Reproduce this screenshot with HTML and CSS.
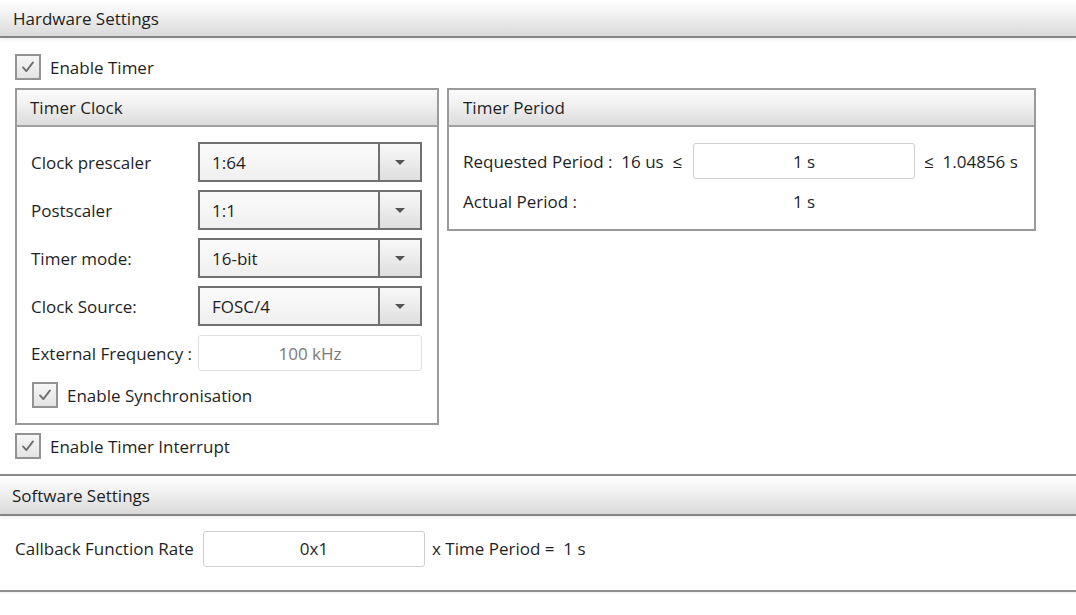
FILE: index.html
```html
<!DOCTYPE html>
<html>
<head>
<meta charset="utf-8">
<link rel="stylesheet" href="styles.css">
</head>
<body>
<div class="section-header first">Hardware Settings</div>
<div class="hw-body">
  <label class="check top-check"><span class="box"><svg viewBox="0 0 24 24"><path d="M6 12.5 L10 17 L18 6.5" /></svg></span><span>Enable Timer</span></label>
  <div class="groups">
    <div class="group clock">
      <div class="group-header">Timer Clock</div>
      <div class="group-body">
        <div class="row"><span class="lbl">Clock prescaler</span><div class="combo"><span class="val">1:64</span><span class="btn"><i class="tri"></i></span></div></div>
        <div class="row"><span class="lbl">Postscaler</span><div class="combo"><span class="val">1:1</span><span class="btn"><i class="tri"></i></span></div></div>
        <div class="row"><span class="lbl">Timer mode:</span><div class="combo"><span class="val">16-bit</span><span class="btn"><i class="tri"></i></span></div></div>
        <div class="row"><span class="lbl">Clock Source:</span><div class="combo"><span class="val">FOSC/4</span><span class="btn"><i class="tri"></i></span></div></div>
        <div class="row ext"><span class="lbl">External Frequency :</span><div class="text disabled">100 kHz</div></div>
        <label class="check sync"><span class="box"><svg viewBox="0 0 24 24"><path d="M6 12.5 L10 17 L18 6.5" /></svg></span><span>Enable Synchronisation</span></label>
      </div>
    </div>
    <div class="group period">
      <div class="group-header">Timer Period</div>
      <div class="group-body period-body">
        <div class="prow"><span class="plbl">Requested Period :&nbsp; 16 us&nbsp; ≤</span><div class="text ptext">1 s</div><span class="pmax">≤&nbsp; 1.04856 s</span></div>
        <div class="prow actual"><span class="plbl">Actual Period :</span><span class="pval">1 s</span></div>
      </div>
    </div>
  </div>
  <label class="check int-check"><span class="box"><svg viewBox="0 0 24 24"><path d="M6 12.5 L10 17 L18 6.5" /></svg></span><span>Enable Timer Interrupt</span></label>
</div>
<div class="section-header second">Software Settings</div>
<div class="sw-body">
  <span class="sw-lbl">Callback Function Rate</span>
  <div class="text swtext">0x1</div>
  <span class="sw-tail">x Time Period =&nbsp; 1 s</span>
</div>
<div class="bottom-line"></div>
</body>
</html>
```

FILE: styles.css
```css
html, body {
  margin: 0;
  padding: 0;
  background: #ffffff;
}
body {
  font-family: "Open Sans", "Noto Sans", sans-serif;
  font-size: 17px;
  color: #1f1f1f;
  width: 1076px;
  height: 615px;
  overflow: hidden;
}
.section-header {
  height: 36px;
  box-sizing: border-box;
  padding-left: 13px;
  display: flex;
  align-items: center;
  background: linear-gradient(to bottom, #ffffff 0%, #f3f3f3 35%, #dadada 100%);
  border-bottom: 2px solid #858585;
  box-shadow: 0 2px 3px rgba(0,0,0,0.06);
}
.section-header.first {
  height: 38px;
}
.section-header.second {
  border-top: 2px solid #8a8a8a;
  height: 42px;
  padding-left: 12px;
}
.hw-body {
  padding: 16px 15px 15px 15px;
}
.check {
  display: flex;
  align-items: center;
  gap: 9px;
}
.box {
  width: 22px;
  height: 22px;
  border: 2px solid #939393;
  background: linear-gradient(to bottom, #f6f6f6, #e4e4e4);
  display: flex;
  align-items: center;
  justify-content: center;
}
.box svg {
  width: 20px;
  height: 20px;
}
.box path {
  fill: none;
  stroke: #6e6e6e;
  stroke-width: 2.2;
  stroke-linecap: round;
  stroke-linejoin: round;
}
.top-check {
  height: 26px;
}
.groups {
  display: flex;
  align-items: flex-start;
  gap: 8px;
  margin-top: 8px;
}
.group {
  border: 2px solid #9a9a9a;
  background: #fff;
}
.group.clock {
  width: 420px;
}
.group.period {
  width: 585px;
}
.group-header {
  height: 37px;
  box-sizing: border-box;
  padding-left: 13px;
  display: flex;
  align-items: center;
  background: linear-gradient(to bottom, #fbfbfb 0%, #f1f1f1 40%, #dcdcdc 100%);
  border-bottom: 2px solid #a0a0a0;
}
.period .group-header {
  padding-left: 14px;
}
.group-body {
  padding: 15px 14px 15px 14px;
  display: flex;
  flex-direction: column;
  gap: 8px;
}
.row {
  display: flex;
  align-items: center;
}
.lbl {
  width: 167px;
  flex: none;
}
.combo {
  width: 224px;
  height: 40px;
  box-sizing: border-box;
  border: 2px solid #707070;
  display: flex;
  background: linear-gradient(to bottom, #fcfcfc, #efefef);
}
.combo .val {
  flex: 1;
  display: flex;
  align-items: center;
  padding-left: 12px;
}
.combo .btn {
  width: 40px;
  border-left: 2px solid #707070;
  background: linear-gradient(to bottom, #f9f9f9, #dedede);
  display: flex;
  align-items: center;
  justify-content: center;
}
.tri {
  width: 0;
  height: 0;
  border-left: 5px solid transparent;
  border-right: 5px solid transparent;
  border-top: 5px solid #555;
}
.text {
  box-sizing: border-box;
  border: 1px solid #cfcfcf;
  border-radius: 3px;
  background: #fff;
  display: flex;
  align-items: center;
  justify-content: center;
}
.row.ext {
  margin-top: 1px;
}
.text.disabled {
  width: 224px;
  height: 36px;
  border-color: #e0e0e0;
  color: #7a7a7a;
}
.check.sync {
  margin-top: 3px;
  margin-left: 1px;
}
.period-body {
  padding: 16px 14px 8px 14px;
  gap: 0;
}
.prow {
  display: flex;
  align-items: center;
}
.prow .plbl {
  width: 230px;
  flex: none;
}
.ptext {
  width: 222px;
  height: 36px;
}
.pmax {
  margin-left: 9px;
}
.prow.actual {
  height: 40px;
  margin-top: 2px;
}
.pval {
  width: 222px;
  text-align: center;
}
.int-check {
  margin-top: 8px;
}
.sw-body {
  display: flex;
  align-items: center;
  padding: 14px 15px 0 15px;
  height: 37px;
}
.sw-lbl {
  width: 188px;
  flex: none;
}
.swtext {
  width: 222px;
  height: 36px;
}
.sw-tail {
  margin-left: 7px;
}
.bottom-line {
  margin-top: 23px;
  height: 0;
  border-top: 2px solid #909090;
  box-shadow: 0 1px 2px rgba(0,0,0,0.08);
}
```
